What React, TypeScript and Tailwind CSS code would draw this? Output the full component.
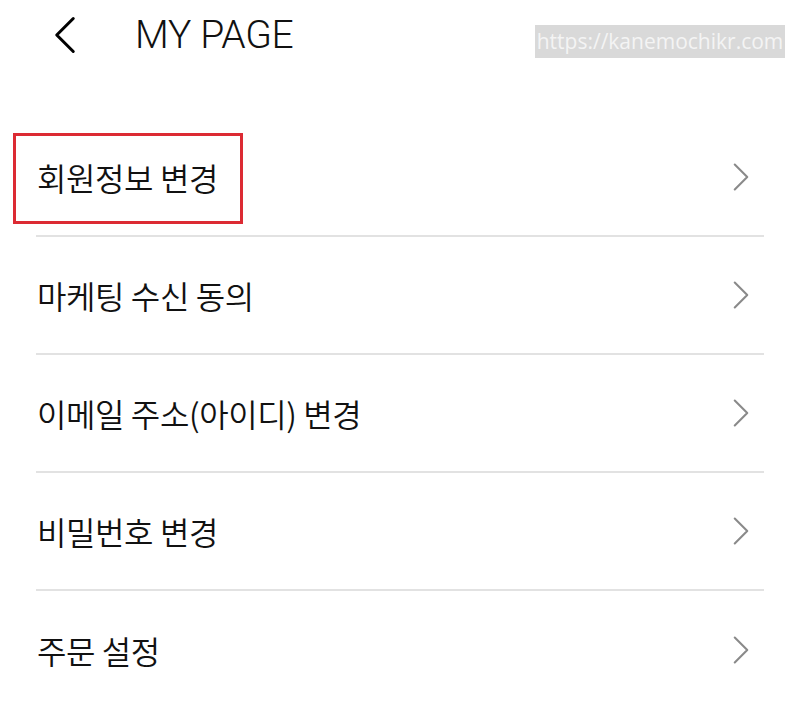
import { ChevronLeft, ChevronRight } from 'lucide-react'

const items = ['회원정보 변경', '마케팅 수신 동의', '이메일 주소(아이디) 변경', '비밀번호 변경', '주문 설정']

function Row({ label, highlight, last }: { label: string; highlight?: boolean; last?: boolean }) {
  return (
    <div className={`relative flex h-[118px] items-center ${last ? '' : 'border-b-2 border-[#e2e2e2]'}`}>
      {highlight && (
        <div className="absolute left-[-23px] top-[14px] h-[91px] w-[230px] border-[3px] border-[#dc2a33]" />
      )}
      <span className="pl-px text-[32px] font-[350] tracking-[-0.4px] text-[#111]">{label}</span>
      <ChevronRight className="ml-auto mr-[-2px] h-[50px] w-[50px] text-[#8a8a8a]" strokeWidth={1} />
    </div>
  )
}

export default function App() {
  return (
    <div className="relative h-[705px] w-[800px] overflow-hidden bg-white font-['Noto_Sans_CJK_KR',sans-serif]">
      <div className="flex h-[70px] items-center">
        <ChevronLeft className="ml-[32px] h-[66px] w-[66px] shrink-0 text-black" strokeWidth={1.1} />
        <h1 className="ml-[37px] font-['Roboto',sans-serif] text-[39px] font-light tracking-[-0.3px] text-[#111]">
          MY PAGE
        </h1>
      </div>
      <div className="absolute left-[535px] top-[25px] flex h-[33px] w-[250px] items-center justify-center bg-[#d9d9d9] font-['Open_Sans',sans-serif] text-[21px] text-[#f4f4f4]">
        https://kanemochikr.com
      </div>
      <div className="mx-[36px] mt-[49px]">
        {items.map((label, i) => (
          <Row key={label} label={label} highlight={i === 0} last={i === items.length - 1} />
        ))}
      </div>
    </div>
  )
}
